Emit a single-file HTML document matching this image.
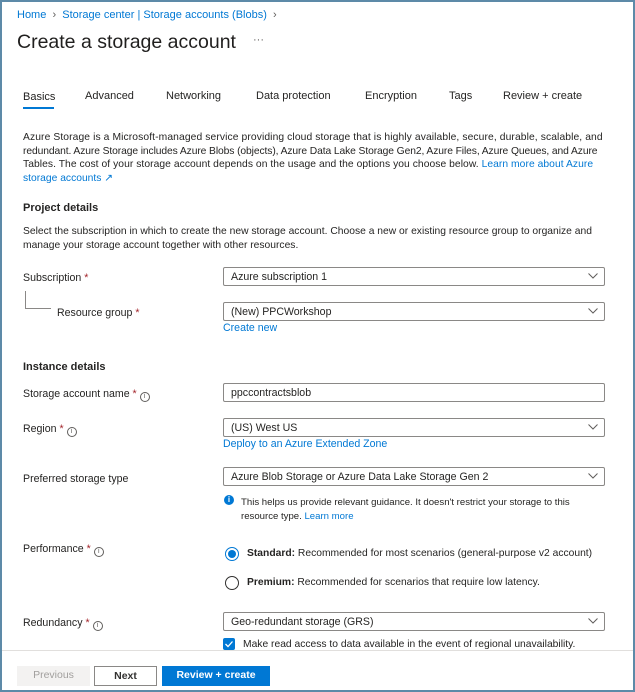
<!DOCTYPE html>
<html><head><meta charset="utf-8"><style>
*{margin:0;padding:0;box-sizing:border-box}
body{width:635px;height:692px;background:#fff;font-family:"Liberation Sans",sans-serif;color:#252423;font-size:10.6px;position:relative;overflow:hidden}
.frame{position:absolute;left:0;top:0;width:635px;height:692px;border:2px solid #5d8aa8}
.a{position:absolute;white-space:nowrap}
.l{color:#0078d4}
.dd{position:absolute;left:223px;width:382px;height:19px;border:1px solid #8a8886;border-radius:2px;padding:3px 0 0 7px;font-size:10.6px}
.dd svg{position:absolute;right:6px;top:5px}
.st{color:#a4262c}
.i{display:inline-block;width:10px;height:10px;border:1px solid #605e5c;border-radius:50%;font-size:7px;line-height:8px;text-align:center;vertical-align:-1px;margin-left:3px;color:#605e5c}
b{font-weight:bold}
.p{font-size:10.3px;line-height:13.7px}
.btn{position:absolute;top:666px;height:20px;font-size:10.5px;font-weight:bold;text-align:center;line-height:19px}
</style></head><body>
<div class="frame"></div>
<div class="a l" style="left:17px;top:9px;font-size:11px">Home <span style="color:#605e5c">&nbsp;›&nbsp;</span> Storage center | Storage accounts (Blobs) <span style="color:#605e5c">&nbsp;›</span></div>
<div class="a" style="left:17px;top:31px;font-size:19.5px;color:#201f1e">Create a storage account</div>
<div class="a" style="left:253px;top:34px;font-size:11px;color:#605e5c">···</div>
<div class="a" style="left:23px;top:91px;font-size:11px;color:#201f1e">Basics</div>
<div class="a" style="left:23px;top:107px;width:31px;height:2px;background:#0078d4"></div>
<div class="a" style="left:85px;top:90px;font-size:11px">Advanced</div>
<div class="a" style="left:166px;top:90px;font-size:11px">Networking</div>
<div class="a" style="left:256px;top:90px;font-size:11px">Data protection</div>
<div class="a" style="left:365px;top:90px;font-size:11px">Encryption</div>
<div class="a" style="left:449px;top:90px;font-size:11px">Tags</div>
<div class="a" style="left:503px;top:90px;font-size:11px">Review + create</div>
<div class="a p" style="left:23px;top:131px"><span style="letter-spacing:0.1px">Azure Storage is a Microsoft-managed service providing cloud storage that is highly available, secure, durable, scalable, and</span><br><span style="letter-spacing:-0.1px">redundant. Azure Storage includes Azure Blobs (objects), Azure Data Lake Storage Gen2, Azure Files, Azure Queues, and Azure</span><br><span style="letter-spacing:0.05px">Tables. The cost of your storage account depends on the usage and the options you choose below. <span class="l">Learn more about Azure</span></span><br><span class="l">storage accounts ↗</span></div>
<div class="a" style="left:23px;top:202px;font-size:11px;font-weight:bold">Project details</div>
<div class="a p" style="left:23px;top:225px">Select the subscription in which to create the new storage account. Choose a new or existing resource group to organize and<br>manage your storage account together with other resources.</div>
<div class="a" style="left:23px;top:272px">Subscription <span class="st">*</span></div>
<div class="dd" style="top:267px">Azure subscription 1<svg width="10" height="6"><path d="M0.5 0.5L5 5L9.5 0.5" fill="none" stroke="#605e5c"/></svg></div>
<div class="a" style="left:25px;top:291px;width:26px;height:18px;border-left:1px solid #8a8886;border-bottom:1px solid #8a8886"></div>
<div class="a" style="left:57px;top:307px">Resource group <span class="st">*</span></div>
<div class="dd" style="top:302px">(New) PPCWorkshop<svg width="10" height="6"><path d="M0.5 0.5L5 5L9.5 0.5" fill="none" stroke="#605e5c"/></svg></div>
<div class="a l" style="left:223px;top:322px">Create new</div>
<div class="a" style="left:23px;top:361px;font-size:11px;font-weight:bold">Instance details</div>
<div class="a" style="left:23px;top:388px">Storage account name <span class="st">*</span><span class="i">i</span></div>
<div class="dd" style="top:383px">ppccontractsblob</div>
<div class="a" style="left:23px;top:423px">Region <span class="st">*</span><span class="i">i</span></div>
<div class="dd" style="top:418px">(US) West US<svg width="10" height="6"><path d="M0.5 0.5L5 5L9.5 0.5" fill="none" stroke="#605e5c"/></svg></div>
<div class="a l" style="left:223px;top:438px">Deploy to an Azure Extended Zone</div>
<div class="a" style="left:23px;top:473px">Preferred storage type</div>
<div class="dd" style="top:467px">Azure Blob Storage or Azure Data Lake Storage Gen 2<svg width="10" height="6"><path d="M0.5 0.5L5 5L9.5 0.5" fill="none" stroke="#605e5c"/></svg></div>
<div class="a" style="left:224px;top:495px;width:10px;height:10px;border-radius:50%;background:#0078d4;color:#fff;font-size:8px;font-weight:bold;text-align:center;line-height:10px">i</div>
<div class="a" style="left:241px;top:496px;font-size:9.6px;line-height:14px">This helps us provide relevant guidance. It doesn't restrict your storage to this<br>resource type. <span class="l">Learn more</span></div>
<div class="a" style="left:23px;top:543px">Performance <span class="st">*</span><span class="i">i</span></div>
<div class="a" style="left:225px;top:547px;width:14px;height:14px;border:1px solid #0078d4;border-radius:50%"><div style="position:absolute;left:2px;top:2px;width:8px;height:8px;border-radius:50%;background:#0078d4"></div></div>
<div class="a" style="left:247px;top:548px;font-size:10.3px"><b>Standard:</b> Recommended for most scenarios (general-purpose v2 account)</div>
<div class="a" style="left:225px;top:576px;width:14px;height:14px;border:1px solid #323130;border-radius:50%"></div>
<div class="a" style="left:247px;top:577px;font-size:10.3px"><b>Premium:</b> Recommended for scenarios that require low latency.</div>
<div class="a" style="left:23px;top:617px">Redundancy <span class="st">*</span><span class="i">i</span></div>
<div class="dd" style="top:612px">Geo-redundant storage (GRS)<svg width="10" height="6"><path d="M0.5 0.5L5 5L9.5 0.5" fill="none" stroke="#605e5c"/></svg></div>
<div class="a" style="left:223px;top:638px;width:12px;height:12px;background:#0078d4;border-radius:2px"><svg width="12" height="12" style="position:absolute;left:0;top:0"><path d="M2.5 6L5 8.5L9.5 3.5" fill="none" stroke="#fff" stroke-width="1.3"/></svg></div>
<div class="a" style="left:243px;top:639px;font-size:10.3px">Make read access to data available in the event of regional unavailability.</div>
<div class="a" style="left:2px;top:650px;width:631px;height:40px;background:#fff;border-top:1px solid #e1dfdd"></div>
<div class="btn" style="left:17px;width:73px;background:#f3f2f1;color:#a19f9d;font-weight:normal">Previous</div>
<div class="btn" style="left:94px;width:63px;border:1px solid #8a8886;color:#323130">Next</div>
<div class="btn" style="left:162px;width:108px;background:#0078d4;color:#fff">Review + create</div>
</body></html>
